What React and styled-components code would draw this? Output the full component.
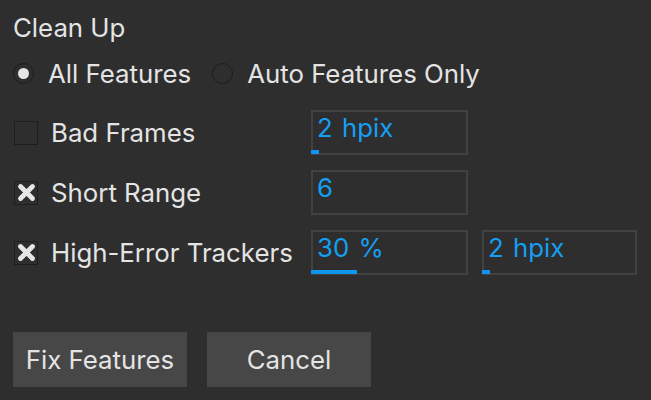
import React from "react";
import styled, { createGlobalStyle } from "styled-components";

const GlobalStyle = createGlobalStyle`
  html, body {
    margin: 0;
    padding: 0;
    background: #2e2e2e;
  }
  body {
    font-family: Inter, "Noto Sans", sans-serif;
    color: #e4e4e4;
  }
`;

const Panel = styled.div`
  width: 651px;
  height: 400px;
  box-sizing: border-box;
  padding: 13px 13px 0 13px;
  background: #2e2e2e;
`;

const Title = styled.div`
  font-size: 25.8px;
  line-height: 30px;
  height: 30px;
`;

const RadioRow = styled.div`
  display: flex;
  align-items: center;
  gap: 21px;
  margin-top: 15px;
  height: 30px;
`;

const RadioOption = styled.label`
  display: flex;
  align-items: center;
  gap: 14px;
  font-size: 25.8px;
`;

const RadioCircle = styled.span`
  width: 21px;
  height: 21px;
  border-radius: 50%;
  box-sizing: border-box;
  border: 1.5px solid #1c1c1c;
  display: flex;
  align-items: center;
  justify-content: center;

  &::after {
    content: "";
    width: 11px;
    height: 11px;
    border-radius: 50%;
    background: #e6e6e6;
    display: ${(p) => (p.checked ? "block" : "none")};
  }
`;

const Grid = styled.div`
  display: grid;
  grid-template-columns: 284px 157px 155px;
  column-gap: 14px;
  row-gap: 15px;
  margin-top: 22px;
  align-items: center;
`;

const CheckLabel = styled.div`
  display: flex;
  align-items: center;
  gap: 13px;
  font-size: 25.8px;
  grid-column: 1;
`;

const CheckBox = styled.span`
  width: 24px;
  height: 24px;
  margin-left: 1px;
  box-sizing: border-box;
  border: 1.5px solid #1e1e1e;
  display: flex;
  align-items: center;
  justify-content: center;
`;

const Field = styled.div`
  position: relative;
  height: 45px;
  box-sizing: border-box;
  border: 2px solid #414141;
  padding: 1px 0 0 4px;
  color: #149ff2;
  font-size: 25.8px;
  line-height: 30px;
  word-spacing: 2px;
`;

const Progress = styled.span`
  position: absolute;
  left: -2px;
  bottom: -1px;
  height: 4px;
  background: #0d95ef;
`;

const Buttons = styled.div`
  display: flex;
  gap: 20px;
  margin-top: 57px;
`;

const Button = styled.button`
  height: 55px;
  width: ${(p) => p.w}px;
  border: none;
  background: #474747;
  color: #e4e4e4;
  font-family: Inter, "Noto Sans", sans-serif;
  font-size: 25.8px;
  padding: 0;
`;

const Cross = () => (
  <svg width="19" height="19" viewBox="0 0 19 19">
    <path
      d="M3.5 3.5 L15.5 15.5 M15.5 3.5 L3.5 15.5"
      stroke="#e6e6e6"
      strokeWidth="4.8"
      strokeLinecap="round"
    />
  </svg>
);

const rows = [
  { label: "Bad Frames", checked: false, fields: [{ v: "2 hpix", p: 8 }] },
  { label: "Short Range", checked: true, fields: [{ v: "6", p: 0 }] },
  {
    label: "High-Error Trackers",
    checked: true,
    fields: [
      { v: "30 %", p: 46 },
      { v: "2 hpix", p: 8 },
    ],
  },
];

export default function App() {
  return (
    <Panel>
      <GlobalStyle />
      <Title>Clean Up</Title>
      <RadioRow>
        <RadioOption>
          <RadioCircle checked />
          All Features
        </RadioOption>
        <RadioOption>
          <RadioCircle />
          Auto Features Only
        </RadioOption>
      </RadioRow>
      <Grid>
        {rows.map((r) => (
          <React.Fragment key={r.label}>
            <CheckLabel>
              <CheckBox>{r.checked && <Cross />}</CheckBox>
              {r.label}
            </CheckLabel>
            {r.fields.map((f, i) => (
              <Field key={i}>
                {f.v}
                {f.p > 0 && <Progress style={{ width: f.p }} />}
              </Field>
            ))}
            {r.fields.length === 1 && <span />}
          </React.Fragment>
        ))}
      </Grid>
      <Buttons>
        <Button w={174}>Fix Features</Button>
        <Button w={164}>Cancel</Button>
      </Buttons>
    </Panel>
  );
}
